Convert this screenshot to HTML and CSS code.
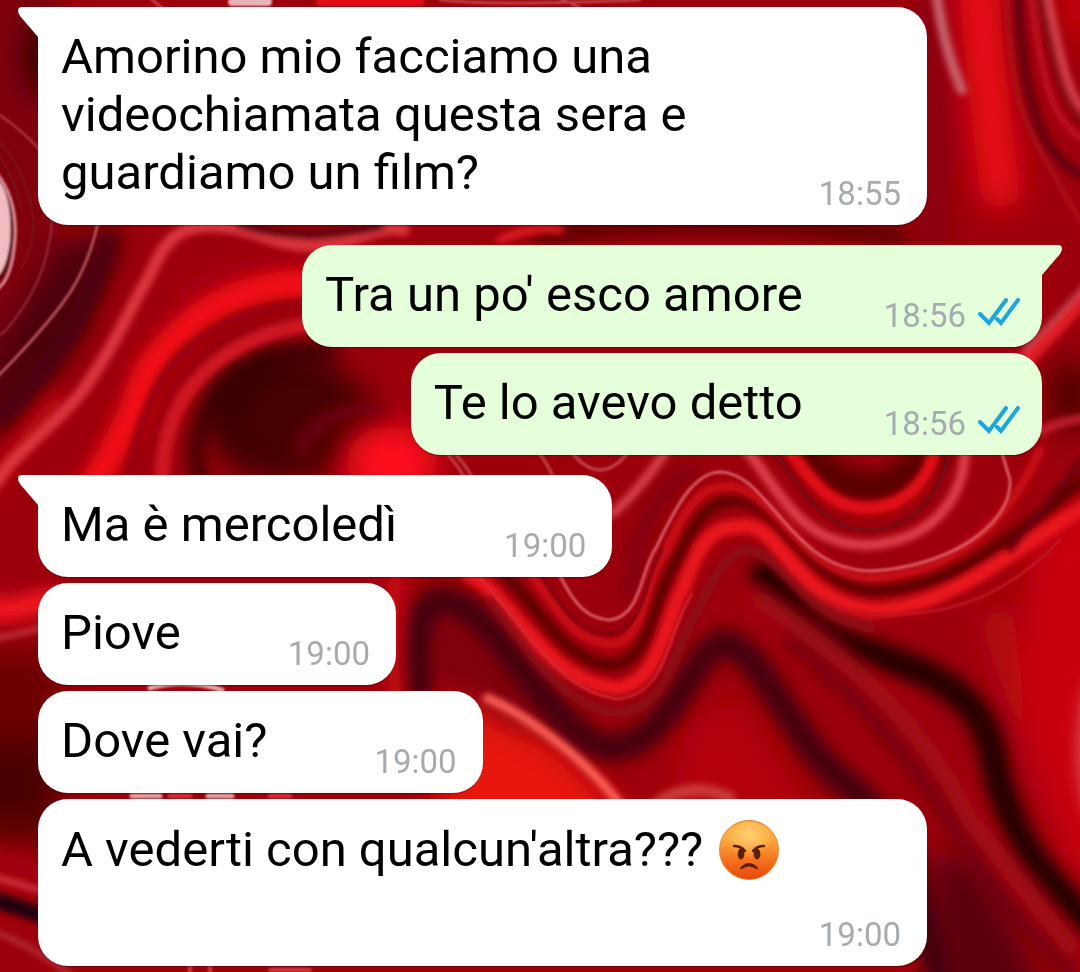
FILE: index.html
```html
<!DOCTYPE html>
<html lang="it">
<head>
  <meta charset="UTF-8" />
  <meta name="viewport" content="width=device-width, initial-scale=1.0" />
  <title>Chat</title>
  <link rel="stylesheet" href="styles.css">
</head>
<body>
  <svg class="wallpaper" viewBox="0 0 1080 972" preserveAspectRatio="xMidYMid slice" aria-hidden="true">
    <defs>
      <filter id="soft" filterUnits="userSpaceOnUse" x="-60" y="-60" width="1200" height="1100"><feGaussianBlur stdDeviation="15"/></filter>
      <filter id="mid" filterUnits="userSpaceOnUse" x="-60" y="-60" width="1200" height="1100"><feGaussianBlur stdDeviation="8"/></filter>
      <filter id="light" filterUnits="userSpaceOnUse" x="-60" y="-60" width="1200" height="1100"><feGaussianBlur stdDeviation="3"/></filter>
      <filter id="fine" filterUnits="userSpaceOnUse" x="-60" y="-60" width="1200" height="1100"><feGaussianBlur stdDeviation="1"/></filter>
    </defs>
    <rect width="1080" height="972" fill="#9c000b"/>

    <!-- big light and dark areas -->
    <g filter="url(#soft)">
      <path d="M-40 -40H60V230Q40 320 -40 380Z" fill="#80000a"/>
      <ellipse cx="38" cy="56" rx="16" ry="44" fill="#100002"/>
      <path d="M-40 650H60V850H-40Z" fill="#6c0004"/>
      <path d="M-40 740H60V825H-40Z" fill="#4c0003"/>
      <path d="M60 240L120 230L80 340L-20 450V370Z" fill="#4c0008"/>
      <ellipse cx="285" cy="415" rx="80" ry="66" fill="#300004"/>
      <ellipse cx="305" cy="420" rx="70" ry="56" fill="#440006"/>
      <ellipse cx="392" cy="462" rx="46" ry="36" fill="#ff0c1c"/>
      <path d="M1030 540L1140 460V960L1060 850L1020 700Z" fill="#c8000c"/>
      <path d="M980 620L1010 600L1050 840L1016 740Z" fill="#b80c12"/>
      <path d="M440 680L500 690L640 830H440Z" fill="#e8160e"/>
      <path d="M690 720L740 700L820 830H660Z" fill="#b4000c"/>
      <path d="M930 850L980 860L1060 1020H940Z" fill="#5c000c"/>
      <ellipse cx="1070" cy="395" rx="22" ry="38" fill="#4c0004"/>
      <path d="M930 0Q940 160 930 260" fill="none" stroke="#84000e" stroke-width="30"/>
      <path d="M976 -50Q986 80 1000 190" fill="none" stroke="#f00814" stroke-width="40" stroke-linecap="round"/>
      <path d="M1090 -20V60L1060 0Z" fill="#e0060e"/>
      <path d="M420 600Q520 640 600 760L540 740L430 690Z" fill="#80000c"/>
    </g>

    <!-- deep shadows and soft folds -->
    <g filter="url(#mid)" fill="none" stroke-linecap="round">
      <path d="M310 284Q240 284 195 320T140 390T90 490" stroke="#f40c18" stroke-width="28"/>
      <path d="M330 262Q230 258 180 296" stroke="#a4000e" stroke-width="14"/>
      <path d="M330 352Q250 350 216 400T205 490" stroke="#300004" stroke-width="14"/>
      <path d="M300 450Q320 406 380 410" stroke="#74000c" stroke-width="14"/>
      <path d="M110 240Q80 340 0 420" stroke="#480008" stroke-width="20"/>
      <path d="M540 236Q700 212 900 236" stroke="#4a0004" stroke-width="14"/>
      <path d="M764 574C790 590 800 616 826 632C870 660 930 662 970 706C1000 740 990 770 1005 800C1020 850 1040 870 1090 925" stroke="#240006" stroke-width="28"/>
      <path d="M418 690C410 590 440 590 470 612C520 650 560 740 610 748C670 748 690 650 724 642C760 650 790 730 830 770C880 810 920 850 940 990" stroke="#440009" stroke-width="28"/>
      <path d="M790 640C850 690 900 740 950 820C990 890 1020 920 1070 972" stroke="#6a0008" stroke-width="14"/>
      <path d="M760 600C850 660 920 720 970 820L1070 946" stroke="#a40a18" stroke-width="18"/>
      <path d="M800 446Q870 530 935 446" stroke="#5c0006" stroke-width="34"/>
      <path d="M690 470Q640 500 630 590" stroke="#80000a" stroke-width="18"/>
      <path d="M-5 480Q20 440 60 400" stroke="#c80814" stroke-width="12"/>
      <path d="M-10 610Q24 610 50 600" stroke="#f21420" stroke-width="24"/>
      <path d="M-10 855Q20 865 50 872" stroke="#a4040e" stroke-width="18"/>
      <path d="M398 560Q386 640 400 720" stroke="#d00814" stroke-width="14"/>
      <path d="M1094 690Q1078 750 1094 810" stroke="#e06068" stroke-width="14"/>
    </g>

    <!-- wide folds -->
    <g filter="url(#light)" fill="none" stroke-linecap="round">
      <path d="M310 302Q230 310 186 350T126 490" stroke="#92000a" stroke-width="8"/>
      <path d="M320 323Q250 330 205 372T162 490" stroke="#ce1624" stroke-width="15"/>
      <path d="M404 230C372 224 360 246 310 246C270 246 250 224 206 226C160 230 160 262 140 292C120 330 110 352 83 390C56 426 20 446 -5 484" stroke="#dc343e" stroke-width="12"/>
      <path d="M240 224Q300 244 380 226" stroke="#5c0008" stroke-width="9"/>
      <path d="M500 240Q530 226 560 230" stroke="#e01c24" stroke-width="8"/>
      <path d="M936 -10Q944 50 962 90" stroke="#c8646c" stroke-width="10"/>
      <path d="M1006 -10Q1010 90 1030 130T1080 220" stroke="#a80818" stroke-width="7"/>
      <path d="M1018 -10Q1020 70 1036 118T1090 178" stroke="#680008" stroke-width="11"/>
      <path d="M1030 -10Q1040 70 1052 100T1090 144" stroke="#c00c20" stroke-width="7"/>
      <path d="M1040 -10Q1050 60 1062 90T1090 128" stroke="#7c0810" stroke-width="6"/>
      <path d="M1047 -10Q1060 60 1070 86T1090 112" stroke="#dc4a54" stroke-width="7"/>
      <path d="M1090 290Q1055 330 1020 366" stroke="#e01c28" stroke-width="16"/>
      <path d="M1090 280Q1055 320 1024 350" stroke="#c05058" stroke-width="4"/>
      <path d="M1040 432Q1060 420 1090 418" stroke="#c82430" stroke-width="8"/>
      <path d="M470 576C510 592 545 684 617 688C660 684 665 620 684 586C702 540 710 526 746 526C780 526 795 600 871 610C950 610 1010 550 1090 504" stroke="#e8141f" stroke-width="15"/>
      <path d="M490 600C530 650 560 708 620 712C672 706 672 650 700 606C716 570 730 552 748 550C786 556 800 616 871 628" stroke="#8c0a14" stroke-width="10"/>
      <path d="M505 574C540 610 565 662 612 665C652 662 650 600 676 560C694 520 708 501 736 500C780 500 800 580 871 590C950 590 1010 540 1090 474" stroke="#620006" stroke-width="12"/>
      <path d="M530 572C556 606 570 642 612 644C648 640 640 586 666 552C686 506 700 486 728 486C778 490 800 574 871 578C940 574 1000 540 1040 450" stroke="#cc0d18" stroke-width="9"/>
      <path d="M742 444C780 490 800 545 867 545C930 542 966 500 965 444" stroke="#e0404a" stroke-width="10"/>
      <path d="M785 444C810 480 830 508 867 508C905 508 930 480 936 444" stroke="#e40812" stroke-width="13"/>
      <path d="M612 514Q640 490 668 448" stroke="#d8404a" stroke-width="9"/>
      <path d="M1010 550Q1050 500 1090 450" stroke="#680008" stroke-width="7"/>
      <path d="M487 698Q520 712 560 744T626 812" stroke="#ff6258" stroke-width="9"/>
      <path d="M656 804Q690 780 730 798" stroke="#c83a3a" stroke-width="12"/>
      <path d="M-5 638Q24 634 45 626" stroke="#d84850" stroke-width="4"/>
      <path d="M-5 877Q20 884 46 892" stroke="#d83440" stroke-width="6"/>
      <path d="M-5 900Q20 908 50 918" stroke="#24000a" stroke-width="16"/>
      <path d="M-5 932Q30 944 74 978" stroke="#b8343e" stroke-width="5"/>
    </g>

    <!-- thin bright lines -->
    <g filter="url(#fine)" fill="none" stroke-linecap="round">
      <path d="M559 574C575 606 588 619 610 620C642 616 640 570 656 548C676 506 694 472 721 472C770 474 790 570 871 571C940 568 1012 530 1010 480L1000 446" stroke="#d85a62" stroke-width="3"/>
      <path d="M540 574C562 606 576 633 611 634C646 628 644 576 662 550" stroke="#7a0008" stroke-width="3"/>
      <path d="M770 446C800 486 820 529 867 530C915 530 945 490 950 446" stroke="#701018" stroke-width="3"/>
      <path d="M480 578C520 620 560 694 618 699C668 694 664 640 692 594" stroke="#d0303a" stroke-width="2"/>
      <path d="M440 446Q456 462 466 480M448 446Q464 462 474 480M533 446Q548 462 554 480M570 450Q600 490 630 450" stroke="#c0424a" stroke-width="3"/>
      <path d="M826 602Q871 622 938 610T1060 540" stroke="#c01620" stroke-width="3"/>
      <path d="M98 222Q88 270 62 304T-5 379" stroke="#b0505a" stroke-width="3"/>
      <path d="M52 222Q48 270 24 306T-5 334" stroke="#943038" stroke-width="2"/>
      <path d="M-5 112Q20 128 42 152" stroke="#b04048" stroke-width="2"/>
      <path d="M-5 138Q20 160 30 200T20 270M-5 150Q12 170 22 210" stroke="#7c1018" stroke-width="3"/>
      <ellipse cx="-5" cy="228" rx="17" ry="50" fill="#f0bcc0" stroke="#4a0a14" stroke-width="3"/>
      <path d="M-4 172Q18 200 15 240T-4 290" stroke="#e09098" stroke-width="3"/>
      <path d="M232 2H268" stroke="#e8b4b8" stroke-width="8"/>
      <path d="M320 2H420" stroke="#e01018" stroke-width="8"/>
      <path d="M440 0Q500 6 640 0M150 -2L162 8M560 -2L580 8" stroke="#c04048" stroke-width="3"/>
      <path d="M150 688Q186 678 222 690M132 796H160M208 796H232" stroke="#e0a4a4" stroke-width="5"/>
      <path d="M170 796H190M270 796H290" stroke="#d02c34" stroke-width="5"/>
      <path d="M190 966V978M210 966V978M270 970H310" stroke="#d03840" stroke-width="4"/>
    </g>
  </svg>

  <main class="chat">
    <section class="group">
      <article class="bubble bubble-in">
        <svg class="tail" viewBox="0 0 20 30" aria-hidden="true"><path d="M20 0H4Q0 0 0 4Q0 6 2 9L20 30Z"/></svg>
        <p class="text">Amorino mio facciamo una videochiamata questa sera e guardiamo un film?</p>
        <time class="time">18:55</time>
      </article>
    </section>

    <section class="group group-out">
      <article class="bubble bubble-out">
        <svg class="tail" viewBox="0 0 20 30" aria-hidden="true"><path d="M0 0H16Q20 0 20 4Q20 6 18 9L0 30Z"/></svg>
        <p class="text">Tra un po' esco amore</p>
        <time class="time">18:56</time>
        <svg class="checks" viewBox="0 0 42 28" role="img" aria-label="Letto"><path d="M2 16L11 25L28 2M19 21L23 25L40 2"/></svg>
      </article>
      <article class="bubble bubble-out no-tail">
        <p class="text">Te lo avevo detto</p>
        <time class="time">18:56</time>
        <svg class="checks" viewBox="0 0 42 28" role="img" aria-label="Letto"><path d="M2 16L11 25L28 2M19 21L23 25L40 2"/></svg>
      </article>
    </section>

    <section class="group">
      <article class="bubble bubble-in">
        <svg class="tail" viewBox="0 0 20 30" aria-hidden="true"><path d="M20 0H4Q0 0 0 4Q0 6 2 9L20 30Z"/></svg>
        <p class="text">Ma è mercoledì</p>
        <time class="time">19:00</time>
      </article>
      <article class="bubble bubble-in no-tail">
        <p class="text">Piove</p>
        <time class="time">19:00</time>
      </article>
      <article class="bubble bubble-in no-tail">
        <p class="text">Dove vai?</p>
        <time class="time">19:00</time>
      </article>
      <article class="bubble bubble-in no-tail bubble-tall">
        <p class="text">A vederti con qualcun'altra???
          <svg class="emoji" viewBox="0 0 60 60" role="img" aria-label="Faccina arrabbiata">
            <defs>
              <linearGradient id="face" x1="0" y1="0" x2="0" y2="1">
                <stop offset="0" stop-color="#f9a638"/>
                <stop offset="0.3" stop-color="#fbab42"/>
                <stop offset="0.65" stop-color="#f5761f"/>
                <stop offset="1" stop-color="#e9440c"/>
              </linearGradient>
              <radialGradient id="shine" cx="0.5" cy="0.22" r="0.42">
                <stop offset="0" stop-color="#ffd070"/>
                <stop offset="1" stop-color="#ffd070" stop-opacity="0"/>
              </radialGradient>
            </defs>
            <circle cx="30" cy="30" r="29.500" fill="url(#face)" stroke="#e58a2c"/>
            <circle cx="30" cy="30" r="28" fill="url(#shine)"/>
            <g fill="#5c2005">
              <ellipse cx="22" cy="34" rx="3.400" ry="5.400"/>
              <ellipse cx="38" cy="34" rx="3.400" ry="5.400"/>
              <path d="M21 48Q30 38 39 48Q39 50 37 49Q30 44 23 49Q21 50 21 48Z"/>
            </g>
            <path d="M15 26Q22 26 26 31M45 26Q38 26 34 31" fill="none" stroke="#5c2005" stroke-width="2.400" stroke-linecap="round"/>
          </svg>
        </p>
        <time class="time">19:00</time>
      </article>
    </section>
  </main>
</body>
</html>
```
FILE: styles.css
```css
* {
  box-sizing: border-box;
}
body {
  margin: 0;
  background-color: #9c000b;
  color: #000;
  font-family: Roboto, 'Noto Sans', sans-serif;
  font-size: 49px;
  line-height: 58px;
}
.wallpaper {
  position: fixed;
  top: 0;
  left: 0;
  width: 100%;
  height: 100%;
  z-index: -1;
}
.chat {
  display: flex;
  flex-direction: column;
  gap: 20px;
  padding: 7px 38px 5px;
}
.group {
  display: flex;
  flex-direction: column;
  align-items: flex-start;
  gap: 6px;
  padding-right: 115px;
}
.group-out {
  align-items: flex-end;
  padding-right: 0;
  padding-left: 115px;
}
.bubble {
  position: relative;
  display: flex;
  align-items: flex-end;
  border-radius: 30px;
  padding: 21px 26px 23px 23px;
  box-shadow: 0 1px 1px rgba(0, 0, 0, 0.3);
}
.bubble-in {
  background-color: #fff;
  border-top-left-radius: 0;
}
.bubble-out {
  background-color: #e5ffdb;
  border-top-right-radius: 0;
  padding-right: 22px;
}
.no-tail {
  border-radius: 30px;
}
.tail {
  position: absolute;
  top: 0;
  width: 20px;
  height: 30px;
}
.bubble-in .tail {
  right: 100%;
  fill: #fff;
}
.bubble-out .tail {
  left: 100%;
  fill: #e5ffdb;
}
.text {
  margin: 0;
}
.time {
  flex: none;
  margin-left: 107px;
  margin-bottom: -21px;
  color: #a5abae;
  font-size: 33px;
}
.bubble-out .time {
  margin-left: 81px;
}
.checks {
  flex: none;
  width: 42px;
  height: 28px;
  margin-left: 12px;
  margin-bottom: -2px;
  fill: none;
  stroke: #1da5e0;
  stroke-width: 4;
  stroke-linecap: round;
}
.bubble-tall {
  flex-direction: column;
  width: 100%;
}
.bubble-tall .text {
  width: 100%;
}
.bubble-tall .time {
  margin-top: 26px;
}
.emoji {
  width: 60px;
  height: 60px;
  margin-left: 4px;
  vertical-align: -14px;
}
```
